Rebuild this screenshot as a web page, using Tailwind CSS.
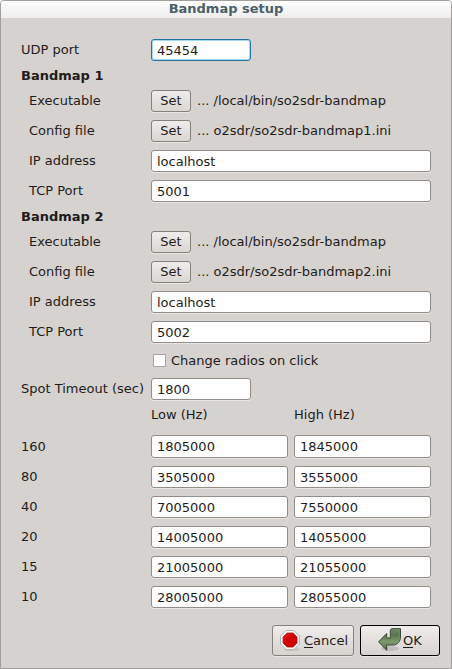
<!DOCTYPE html>
<html lang="en">
<head>
<meta charset="utf-8">
<title>Bandmap setup</title>
<script src="https://cdn.jsdelivr.net/npm/@tailwindcss/browser@4"></script>
</head>
<body class="bg-white">
<div class="w-[452px] h-[669px] box-border border border-[#a09f9e] rounded-t-[4px] bg-[#d6d2cf] overflow-hidden text-[13px] leading-[22px] text-[#1f1c1b] whitespace-nowrap [font-family:'DejaVu_Sans',sans-serif]">
  <header class="h-[17px] bg-linear-to-b from-white to-[#ededed] text-center font-bold leading-[15px] text-[#4b6068]">Bandmap setup</header>

  <main class="pl-5 pr-5">
    <div class="flex h-[27px] mt-[21px]">
      <div class="w-[130px]">UDP port</div>
      <div class="w-[100px] h-[22px] border border-[#2573a3] rounded-[3px] bg-white pl-[5px] leading-[21px] shadow-[inset_0_0_0_1px_#a5d8f3]">45454</div>
    </div>
    <div class="h-[24px] font-bold leading-[20px]">Bandmap 1</div>
    <div class="flex h-[30px]">
      <div class="w-[122px] ml-2">Executable</div>
      <div class="w-[40px] h-[22px] border border-[#85817d] rounded-[3px] bg-linear-to-b from-[#efedeb] to-[#d9d6d3] text-center leading-[19px] shadow-[0_1px_0_#e9e6e4]">Set</div>
      <div class="ml-[6px]">... /local/bin/so2sdr-bandmap</div>
    </div>
    <div class="flex h-[30px]">
      <div class="w-[122px] ml-2">Config file</div>
      <div class="w-[40px] h-[22px] border border-[#85817d] rounded-[3px] bg-linear-to-b from-[#efedeb] to-[#d9d6d3] text-center leading-[19px] shadow-[0_1px_0_#e9e6e4]">Set</div>
      <div class="ml-[6px]">... o2sdr/so2sdr-bandmap1.ini</div>
    </div>
    <div class="flex h-[30px]">
      <div class="w-[122px] ml-2">IP address</div>
      <div class="w-[280px] h-[22px] border border-[#918d88] rounded-[3px] bg-white pl-[5px] leading-[21px] shadow-[0_1px_0_#e9e6e4]">localhost</div>
    </div>
    <div class="flex h-[27px]">
      <div class="w-[122px] ml-2">TCP Port</div>
      <div class="w-[280px] h-[22px] border border-[#918d88] rounded-[3px] bg-white pl-[5px] leading-[21px] shadow-[0_1px_0_#e9e6e4]">5001</div>
    </div>
    <div class="h-[24px] font-bold leading-[20px]">Bandmap 2</div>
    <div class="flex h-[30px]">
      <div class="w-[122px] ml-2">Executable</div>
      <div class="w-[40px] h-[22px] border border-[#85817d] rounded-[3px] bg-linear-to-b from-[#efedeb] to-[#d9d6d3] text-center leading-[19px] shadow-[0_1px_0_#e9e6e4]">Set</div>
      <div class="ml-[6px]">... /local/bin/so2sdr-bandmap</div>
    </div>
    <div class="flex h-[30px]">
      <div class="w-[122px] ml-2">Config file</div>
      <div class="w-[40px] h-[22px] border border-[#85817d] rounded-[3px] bg-linear-to-b from-[#efedeb] to-[#d9d6d3] text-center leading-[19px] shadow-[0_1px_0_#e9e6e4]">Set</div>
      <div class="ml-[6px]">... o2sdr/so2sdr-bandmap2.ini</div>
    </div>
    <div class="flex h-[30px]">
      <div class="w-[122px] ml-2">IP address</div>
      <div class="w-[280px] h-[22px] border border-[#918d88] rounded-[3px] bg-white pl-[5px] leading-[21px] shadow-[0_1px_0_#e9e6e4]">localhost</div>
    </div>
    <div class="flex h-[30px]">
      <div class="w-[122px] ml-2">TCP Port</div>
      <div class="w-[280px] h-[22px] border border-[#918d88] rounded-[3px] bg-white pl-[5px] leading-[21px] shadow-[0_1px_0_#e9e6e4]">5002</div>
    </div>
    <div class="flex h-[27px] pl-[132px] leading-[20px]">
      <div class="w-[13px] h-[13px] mt-[3px] border border-[#a9a5a1] bg-white"></div>
      <div class="ml-[5px]">Change radios on click</div>
    </div>
    <div class="flex h-[27px]">
      <div class="w-[130px]">Spot Timeout (sec)</div>
      <div class="w-[100px] h-[22px] border border-[#918d88] rounded-[3px] bg-white pl-[5px] leading-[21px] shadow-[0_1px_0_#e9e6e4]">1800</div>
    </div>
    <div class="flex h-[30px] pl-[130px] leading-[19px]">
      <div class="w-[143px]">Low (Hz)</div>
      <div>High (Hz)</div>
    </div>

    <div class="grid auto-rows-[30px]">
      <div class="flex h-[31px]">
        <div class="w-[130px] leading-[24px]">160</div>
        <div class="w-[137px] h-[23px] border border-[#918d88] rounded-[3px] bg-white pl-[5px] leading-[21px] shadow-[0_1px_0_#e9e6e4]">1805000</div>
        <div class="w-[137px] h-[23px] ml-[6px] border border-[#918d88] rounded-[3px] bg-white pl-[5px] leading-[21px] shadow-[0_1px_0_#e9e6e4]">1845000</div>
      </div>
      <div class="flex mt-px">
        <div class="w-[130px]">80</div>
        <div class="w-[137px] h-[22px] border border-[#918d88] rounded-[3px] bg-white pl-[5px] leading-[21px] shadow-[0_1px_0_#e9e6e4]">3505000</div>
        <div class="w-[137px] h-[22px] ml-[6px] border border-[#918d88] rounded-[3px] bg-white pl-[5px] leading-[21px] shadow-[0_1px_0_#e9e6e4]">3555000</div>
      </div>
      <div class="flex mt-px">
        <div class="w-[130px]">40</div>
        <div class="w-[137px] h-[22px] border border-[#918d88] rounded-[3px] bg-white pl-[5px] leading-[21px] shadow-[0_1px_0_#e9e6e4]">7005000</div>
        <div class="w-[137px] h-[22px] ml-[6px] border border-[#918d88] rounded-[3px] bg-white pl-[5px] leading-[21px] shadow-[0_1px_0_#e9e6e4]">7550000</div>
      </div>
      <div class="flex mt-px">
        <div class="w-[130px]">20</div>
        <div class="w-[137px] h-[22px] border border-[#918d88] rounded-[3px] bg-white pl-[5px] leading-[21px] shadow-[0_1px_0_#e9e6e4]">14005000</div>
        <div class="w-[137px] h-[22px] ml-[6px] border border-[#918d88] rounded-[3px] bg-white pl-[5px] leading-[21px] shadow-[0_1px_0_#e9e6e4]">14055000</div>
      </div>
      <div class="flex mt-px">
        <div class="w-[130px]">15</div>
        <div class="w-[137px] h-[22px] border border-[#918d88] rounded-[3px] bg-white pl-[5px] leading-[21px] shadow-[0_1px_0_#e9e6e4]">21005000</div>
        <div class="w-[137px] h-[22px] ml-[6px] border border-[#918d88] rounded-[3px] bg-white pl-[5px] leading-[21px] shadow-[0_1px_0_#e9e6e4]">21055000</div>
      </div>
      <div class="flex mt-px">
        <div class="w-[130px]">10</div>
        <div class="w-[137px] h-[22px] border border-[#918d88] rounded-[3px] bg-white pl-[5px] leading-[21px] shadow-[0_1px_0_#e9e6e4]">28005000</div>
        <div class="w-[137px] h-[22px] ml-[6px] border border-[#918d88] rounded-[3px] bg-white pl-[5px] leading-[21px] shadow-[0_1px_0_#e9e6e4]">28055000</div>
      </div>
    </div>
  </main>

  <footer class="flex justify-end gap-[6px] mt-[10px] pr-[11px]">
    <div class="flex w-[82px] h-[31px] pl-[7px] border border-[#85817d] rounded-[3px] bg-linear-to-b from-[#efedeb] to-[#d6d2cf] shadow-[0_1px_0_#e9e6e4]">
      <svg class="w-[22px] h-[22px] mt-[4px] shrink-0" viewBox="0 0 22 22">
        <defs>
          <linearGradient id="stopRed" x1="0" y1="0" x2="1" y2="1"><stop offset="0" stop-color="#ef2020"/><stop offset=".5" stop-color="#cc0000"/><stop offset="1" stop-color="#d80000"/></linearGradient>
        </defs>
        <ellipse cx="12" cy="19.5" rx="8" ry="1.600" fill="#000" opacity=".1"/>
        <path d="M6 .5h8l5.500 5.500v8L14 19.500H6L.5 14V6z" fill="#f4f5f2" stroke="#b4b6b1"/>
        <path d="M7.200 3h5.800l4 4.100v5.800l-4 4.100H7.200l-4.100-4.100V7.100z" fill="url(#stopRed)" stroke="#b80000" stroke-width=".8"/>
      </svg>
      <div class="ml-[2px] leading-[30px]"><span class="inline-block h-[22px] leading-[30px] border-b border-[#1f1c1b] align-top">C</span>ancel</div>
    </div>
    <div class="flex w-[80px] h-[31px] pl-[17px] border border-black rounded-[3px] bg-linear-to-b from-[#efedeb] to-[#d6d2cf] shadow-[0_1px_0_#e9e6e4]">
      <svg class="w-[24px] h-[25px] mt-[2px] shrink-0" viewBox="0 0 24 25">
        <defs>
          <linearGradient id="arrowGreen" x1="0" y1="0" x2="0" y2="1"><stop offset="0" stop-color="#6a875d"/><stop offset=".3" stop-color="#5c7650"/><stop offset=".6" stop-color="#7b996c"/><stop offset="1" stop-color="#4f6d45"/></linearGradient>
        </defs>
        <ellipse cx="12" cy="20.500" rx="9" ry="2.500" fill="#000" opacity=".12"/>
        <path d="M13.500.700h9v8.300c0 4.500-3 7.500-6.500 8H8.700v5.300L.600 13.800l8.100-8.300v4.400h3.600V2.300z" fill="url(#arrowGreen)" stroke="#3a4936" stroke-linejoin="round"/>
        <path d="M14 1.800h7.400V9c0 3.600-2.300 6.300-5.600 6.900" fill="none" stroke="#91ab84" stroke-width=".7" opacity=".5"/>
      </svg>
      <div class="ml-[1px] leading-[30px]"><span class="inline-block h-[22px] leading-[30px] border-b border-[#1f1c1b] align-top">O</span>K</div>
    </div>
  </footer>
</div>
</body>
</html>
